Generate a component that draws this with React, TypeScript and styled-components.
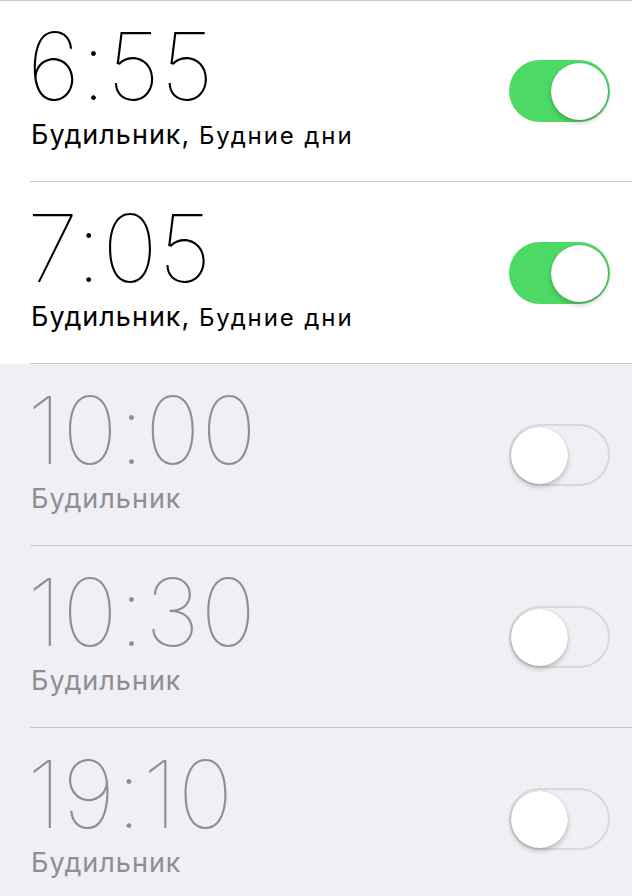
import React from "react";
import styled, { createGlobalStyle } from "styled-components";

const Global = createGlobalStyle`
  html, body { margin: 0; padding: 0; background: #efeff4; }
  body { width: 632px; overflow: hidden; }
  * { box-sizing: border-box; }
`;

const List = styled.div`
  border-top: 1px solid #c8c7cc;
  display: flex;
  flex-direction: column;
`;

const Row = styled.div<{ $on: boolean }>`
  background: ${(p) => (p.$on ? "#ffffff" : "#efeff4")};
  padding-left: 30px;
  &:first-child > div {
    height: 181px;
    padding-top: 8px;
  }
`;

const Inner = styled.div`
  height: 182px;
  padding-top: 9px;
  padding-right: 22px;
  border-bottom: 1px solid #c8c7cc;
  display: flex;
  align-items: flex-start;
  justify-content: space-between;
`;

const Texts = styled.div<{ $on: boolean }>`
  display: flex;
  flex-direction: column;
  color: ${(p) => (p.$on ? "#000000" : "#8e8e93")};
`;

const Time = styled.div`
  font-family: "Inter", "Liberation Sans", sans-serif;
  font-weight: 135;
  font-size: 94px;
  line-height: 114px;
  letter-spacing: 0.8px;
  margin-left: -3px;
  white-space: nowrap;
`;

const Label = styled.div`
  font-family: "Inter", "Liberation Sans", sans-serif;
  font-weight: 400;
  font-size: 27px;
  line-height: 24px;
  letter-spacing: 1px;
  padding-left: 1px;
  white-space: nowrap;
`;

const Repeat = styled.span`
  font-size: 24px;
  letter-spacing: 1.9px;
`;

const Track = styled.div<{ $on: boolean }>`
  position: relative;
  align-self: center;
  margin-top: -9px;
  width: 101px;
  height: 62px;
  border-radius: 31px;
  background: ${(p) => (p.$on ? "#4cd964" : "transparent")};
  border: ${(p) => (p.$on ? "none" : "2px solid #d8d8dc")};
  flex-shrink: 0;
`;

const Knob = styled.div<{ $on: boolean }>`
  position: absolute;
  top: ${(p) => (p.$on ? "3px" : "1px")};
  ${(p) => (p.$on ? "right: 2px;" : "left: 0px;")}
  width: 57px;
  height: 57px;
  border-radius: 50%;
  background: #ffffff;
  box-shadow: 0 3px 5px rgba(0, 0, 0, 0.2), 0 0 1px rgba(0, 0, 0, 0.3);
`;

type Alarm = { time: string; repeat?: string; on: boolean };

const alarms: Alarm[] = [
  { time: "6:55", repeat: "Будние дни", on: true },
  { time: "7:05", repeat: "Будние дни", on: true },
  { time: "10:00", on: false },
  { time: "10:30", on: false },
  { time: "19:10", on: false },
];

export default function App() {
  return (
    <>
      <Global />
      <List>
        {alarms.map((a) => (
          <Row key={a.time} $on={a.on}>
            <Inner>
              <Texts $on={a.on}>
                <Time>{a.time}</Time>
                <Label>
                  Будильник{a.repeat ? "," : ""}
                  {a.repeat && <Repeat> {a.repeat}</Repeat>}
                </Label>
              </Texts>
              <Track $on={a.on}>
                <Knob $on={a.on} />
              </Track>
            </Inner>
          </Row>
        ))}
      </List>
    </>
  );
}
